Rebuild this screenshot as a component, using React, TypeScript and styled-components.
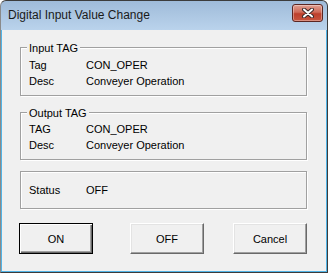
import React from 'react';
import styled, {createGlobalStyle} from "styled-components";

const groups = [
    {
        title: 'Input TAG',
        pt: 9,
        rows: [
            {label: 'Tag', value: 'CON_OPER'},
            {label: 'Desc', value: 'Conveyer Operation'},
        ]
    },
    {
        title: 'Output TAG',
        pt: 8,
        rows: [
            {label: 'TAG', value: 'CON_OPER'},
            {label: 'Desc', value: 'Conveyer Operation'},
        ]
    },
]

const buttons = [
    {text: 'ON', gap: 0, isDefault: true},
    {text: 'OFF', gap: 37, isDefault: false},
    {text: 'Cancel', gap: 29, isDefault: false},
]

export default function App() {
    return (
        <>
            <GlobalStyle/>
            <Window>
                <TitleBar>
                    <Caption>Digital Input Value Change</Caption>
                    <CloseButton aria-label="Close">
                        <svg width="12" height="10" viewBox="0 0 12 10">
                            <path d="M2 1.5 L10 8.5 M10 1.5 L2 8.5" stroke="#3b2a2a" strokeWidth="4" strokeLinecap="round"/>
                            <path d="M2 1.5 L10 8.5 M10 1.5 L2 8.5" stroke="#fff" strokeWidth="2" strokeLinecap="round"/>
                        </svg>
                    </CloseButton>
                </TitleBar>

                <Client>
                    {groups.map((g, i) => (
                        <Group key={g.title} $pt={g.pt} $pb={6} $mt={i === 0 ? 0 : 16}>
                            <Legend>{g.title}</Legend>
                            {g.rows.map((r) => (
                                <Row key={r.label}>
                                    <Label>{r.label}</Label>
                                    <span>{r.value}</span>
                                </Row>
                            ))}
                        </Group>
                    ))}

                    <Group $pt={10} $pb={10} $mt={11}>
                        <Row>
                            <Label>Status</Label>
                            <span>OFF</span>
                        </Row>
                    </Group>

                    <ButtonRow>
                        {buttons.map((b) => (
                            <Button key={b.text} $gap={b.gap} $isDefault={b.isDefault}>{b.text}</Button>
                        ))}
                    </ButtonRow>
                </Client>
            </Window>
        </>
    );
}

const GlobalStyle = createGlobalStyle`
  body {
    margin: 0;
    background: #fff;
    font-family: "Liberation Sans", Arial, sans-serif;
  }
`

const Window = styled.div`
  width: 328px;
  height: 273px;
  box-sizing: border-box;
  display: flex;
  flex-direction: column;
  border: 1px solid #3c3c3c;
  border-left-color: #8a8a8a;
  border-radius: 6px 6px 0 0;
  background: linear-gradient(#9fbbd9, #bad3ec 29px, #bad3ec);
  overflow: hidden;
`

const TitleBar = styled.div`
  height: 29px;
  display: flex;
  align-items: flex-start;
  flex-shrink: 0;
`

const Caption = styled.div`
  padding: 7px 0 0 7px;
  font-size: 12px;
  line-height: 15px;
  color: #1a1a1a;
`

const CloseButton = styled.button`
  margin: 3px 4px 0 auto;
  width: 31px;
  height: 18px;
  padding: 0;
  display: flex;
  align-items: center;
  justify-content: center;
  border: 1px solid #5b2622;
  border-radius: 3px;
  background: linear-gradient(#e0a092, #cf6a58 45%, #bd3f2c 55%, #c8553f);
  box-shadow: inset 0 0 0 1px rgba(255, 255, 255, 0.35);
`

const Client = styled.div`
  flex: 1;
  background: #f0f0f0;
  border: 1px solid #52b4e6;
  border-top: none;
  padding: 17px 19px 0 18px;
  display: flex;
  flex-direction: column;
  font-size: 11px;
  color: #000;
`

const Group = styled.div<{ $pt: number; $pb: number; $mt: number }>`
  position: relative;
  margin-top: ${p => p.$mt}px;
  padding: ${p => p.$pt}px 8px ${p => p.$pb}px;
  border: 1px solid #a0a0a0;
  box-shadow: inset 1px 1px 0 #fff, 1px 1px 0 #fff;
`

const Legend = styled.span`
  position: absolute;
  top: -8px;
  left: 6px;
  padding: 0 2px;
  line-height: 16px;
  background: #f0f0f0;
`

const Row = styled.div`
  display: flex;
  line-height: 16px;
  white-space: nowrap;
`

const Label = styled.span`
  width: 57px;
  flex-shrink: 0;
`

const ButtonRow = styled.div`
  display: flex;
  margin: 14px 0 0 -1px;
`

const Button = styled.button<{ $gap: number; $isDefault: boolean }>`
  margin-left: ${p => p.$gap}px;
  width: 75px;
  height: 31px;
  padding: 0;
  font-family: "Liberation Sans", Arial, sans-serif;
  font-size: 11px;
  color: #000;
  background: #f0f0f0;
  border: 1px solid;
  border-color: ${p => p.$isDefault ? '#000' : '#fff #696969 #696969 #fff'};
  box-shadow: ${p => p.$isDefault
    ? 'inset 1px 1px 0 #fff, inset -1px -1px 0 #696969, inset -2px -2px 0 #a0a0a0'
    : 'inset -1px -1px 0 #a0a0a0, inset 1px 1px 0 #e3e3e3'};
`
